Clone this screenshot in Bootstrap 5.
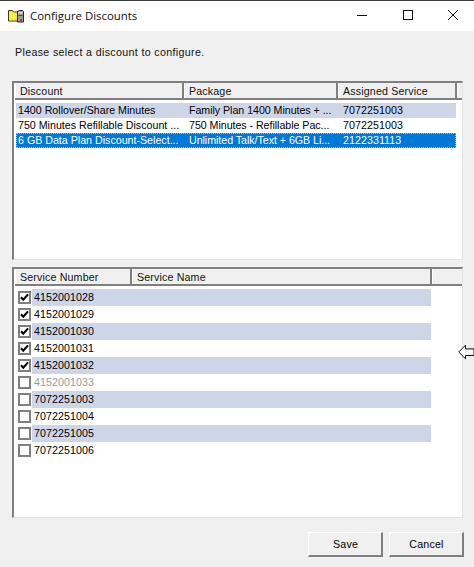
<!DOCTYPE html>
<html lang="en">
<head>
<meta charset="utf-8">
<title>Configure Discounts</title>
<link href="https://cdn.jsdelivr.net/npm/bootstrap@5.3.0/dist/css/bootstrap.min.css" rel="stylesheet">
<style>
html,body{margin:0;background:#f0f0f0;}
body{width:474px;height:567px;overflow:hidden;position:relative;font:10.67px/15px "Liberation Sans",Arial,sans-serif;color:#000;}
.titlebar{height:31px;background:#fff;border-top:1px solid #3c3c3c;padding-left:8px;}
.titletext{font:11.4px/16px "Open Sans",sans-serif;margin-left:6px;color:#111;}
.winbtns{margin-left:auto;gap:35.5px;padding-right:16px;margin-bottom:2px;}
.prompt{height:50px;padding:14px 0 0 15px;color:#111;letter-spacing:.34px;}
.grid-a,.grid-b{margin-left:12px;width:451px;background:#fff;border-left:2px solid #7f7f7f;border-top:2px solid #7f7f7f;border-right:1px solid #e3e3e3;border-bottom:1px solid #e3e3e3;padding-left:1px;}
.grid-a{height:179px;}
.grid-b{height:251px;margin-top:7px;}
.headrow{height:15px;background:#f0f0f0;border-bottom:2px solid #7f7f7f;box-sizing:content-box;}
.hcell{height:15px;padding:1px 0 0 4px;line-height:14px;border-right:2px solid #7f7f7f;border-left:1px solid #fff;letter-spacing:.15px;color:#111;flex:none;overflow:hidden;white-space:nowrap;}
.w-disc{width:169px;}.w-pack{width:154px;}.w-serv{width:119px;}.w-tail{width:6px;padding:0;border-right:0;}
.w-num{width:117px;}.w-name{width:300px;}
.rows-a{padding:3px 0 0 1px;}
.rowa{height:15px;width:440px;white-space:nowrap;}
.rowa span{display:block;flex:none;padding-left:2px;}
.ca{width:171px;}.cb{width:148px;letter-spacing:-.04px;}.cc{width:121px;padding-left:8px!important;letter-spacing:.06px;}
.shade{background:#cdd6e8;}
.picked{background:#0078d7;color:#fff;outline:1px dotted #ffb900;outline-offset:-1px;}
.rows-b{padding:3px 0 0 3px;}
.rowb{height:17px;}
.tick{width:13px;height:13px;border:2px solid #808080;background:#fff;flex:none;margin-right:1px;}
.tick svg{display:block;}
.numcell{width:399px;height:17px;padding:1px 0 0 2px;line-height:15px;letter-spacing:.06px;}
.off{color:#9a9a9a;}
.actions{padding-top:14px;padding-right:10px;gap:6px;}
.winctl{width:75px;height:25px;padding:0 0 0 1px;border-radius:0;background:#f0f0f0;font:10.67px/22px "Liberation Sans",Arial,sans-serif;letter-spacing:.2px;color:#000;border-style:solid;border-color:#fff #7f7f7f #7f7f7f #fff;border-width:1px 2px 2px 1px;}
.pointer{position:absolute;left:458px;top:344px;}
</style>
</head>
<body>
<div class="titlebar d-flex align-items-center">
  <svg width="16" height="14" viewBox="0 0 16 14">
    <path d="M.5 12V1.5h4l1 1.5h5v9z" fill="#f2ea2e" stroke="#3a3a20"/>
    <path d="M1 5h9M1 8h9M3 3v9M6 3v9" stroke="#fff78a" stroke-width=".6"/>
    <path d="M9.5 2.5l2-1h3l1 1v10.5h-6z" fill="#9a9a9a" stroke="#262626"/>
    <rect x="10.5" y="3" width="4" height="1.5" fill="#e8e8e8"/>
    <rect x="10.5" y="6" width="4" height="1" fill="#4a4a4a"/>
    <rect x="12" y="10" width="2" height="2" fill="#e0202a"/>
  </svg>
  <span class="titletext">Configure Discounts</span>
  <div class="winbtns d-flex">
    <svg width="10" height="10" viewBox="0 0 10 10"><path d="M0 5.5h10" stroke="#111"/></svg>
    <svg width="10" height="10" viewBox="0 0 10 10"><rect x=".5" y=".5" width="9" height="9" fill="none" stroke="#111"/></svg>
    <svg width="10" height="10" viewBox="0 0 10 10"><path d="M0 0l10 10M10 0L0 10" stroke="#111"/></svg>
  </div>
</div>

<div class="prompt">Please select a discount to configure.</div>

<div class="grid-a">
  <div class="headrow d-flex">
    <div class="hcell w-disc">Discount</div>
    <div class="hcell w-pack">Package</div>
    <div class="hcell w-serv">Assigned Service</div>
    <div class="hcell w-tail"></div>
  </div>
  <div class="rows-a">
    <div class="rowa shade d-flex"><span class="ca">1400 Rollover/Share Minutes</span><span class="cb">Family Plan 1400 Minutes + ...</span><span class="cc">7072251003</span></div>
    <div class="rowa d-flex"><span class="ca">750 Minutes Refillable Discount ...</span><span class="cb">750 Minutes - Refillable Pac...</span><span class="cc">7072251003</span></div>
    <div class="rowa picked d-flex"><span class="ca">6 GB Data Plan Discount-Select...</span><span class="cb">Unlimited Talk/Text + 6GB Li...</span><span class="cc">2122331113</span></div>
  </div>
</div>

<div class="grid-b">
  <div class="headrow d-flex">
    <div class="hcell w-num">Service Number</div>
    <div class="hcell w-name">Service Name</div>
    <div class="hcell w-tail"></div>
  </div>
  <div class="rows-b">
    <div class="rowb d-flex align-items-center"><div class="tick"><svg width="9" height="9" viewBox="0 0 9 9"><path d="M1 4.3l2.3 2.4L8 1.4" fill="none" stroke="#000" stroke-width="2.1"/></svg></div><div class="numcell shade">4152001028</div></div>
    <div class="rowb d-flex align-items-center"><div class="tick"><svg width="9" height="9" viewBox="0 0 9 9"><path d="M1 4.3l2.3 2.4L8 1.4" fill="none" stroke="#000" stroke-width="2.1"/></svg></div><div class="numcell">4152001029</div></div>
    <div class="rowb d-flex align-items-center"><div class="tick"><svg width="9" height="9" viewBox="0 0 9 9"><path d="M1 4.3l2.3 2.4L8 1.4" fill="none" stroke="#000" stroke-width="2.1"/></svg></div><div class="numcell shade">4152001030</div></div>
    <div class="rowb d-flex align-items-center"><div class="tick"><svg width="9" height="9" viewBox="0 0 9 9"><path d="M1 4.3l2.3 2.4L8 1.4" fill="none" stroke="#000" stroke-width="2.1"/></svg></div><div class="numcell">4152001031</div></div>
    <div class="rowb d-flex align-items-center"><div class="tick"><svg width="9" height="9" viewBox="0 0 9 9"><path d="M1 4.3l2.3 2.4L8 1.4" fill="none" stroke="#000" stroke-width="2.1"/></svg></div><div class="numcell shade">4152001032</div></div>
    <div class="rowb d-flex align-items-center"><div class="tick"></div><div class="numcell off">4152001033</div></div>
    <div class="rowb d-flex align-items-center"><div class="tick"></div><div class="numcell shade">7072251003</div></div>
    <div class="rowb d-flex align-items-center"><div class="tick"></div><div class="numcell">7072251004</div></div>
    <div class="rowb d-flex align-items-center"><div class="tick"></div><div class="numcell shade">7072251005</div></div>
    <div class="rowb d-flex align-items-center"><div class="tick"></div><div class="numcell">7072251006</div></div>
  </div>
</div>

<div class="actions d-flex justify-content-end">
  <button type="button" class="btn winctl">Save</button>
  <button type="button" class="btn winctl">Cancel</button>
</div>

<svg class="pointer" width="16" height="16" viewBox="0 0 16 16"><path d="M.7 8L7.5 1.2V4.9H16v6.6H7.5v3.3z" fill="#fff" stroke="#111"/></svg>

<script src="https://cdn.jsdelivr.net/npm/bootstrap@5.3.0/dist/js/bootstrap.bundle.min.js"></script>
</body>
</html>
